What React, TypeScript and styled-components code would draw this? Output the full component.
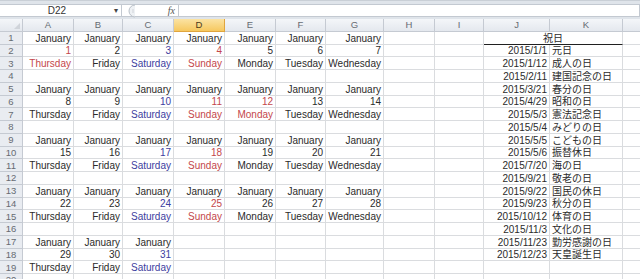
import { createGlobalStyle, styled } from 'styled-components';

const GlobalStyle = createGlobalStyle`
  html, body {
    margin: 0;
    padding: 0;
    background: #ffffff;
    overflow: hidden;
  }
`;

type Tone = 'plain' | 'red' | 'blue';
type Align = 'left' | 'right' | 'center';

interface CellData {
  text: string;
  tone?: Tone;
  align?: Align;
  underline?: boolean;
  span?: number;
}

const COLUMNS: [string, number][] = [
  ['A', 51],
  ['B', 49],
  ['C', 51],
  ['D', 51],
  ['E', 51],
  ['F', 50],
  ['G', 58],
  ['H', 51],
  ['I', 49],
  ['J', 66],
  ['K', 73],
  ['L', 80],
];

const DAY_NAMES = ['Thursday', 'Friday', 'Saturday', 'Sunday', 'Monday', 'Tuesday', 'Wednesday'];
const HOLIDAY_DATES = [1, 12];

const HOLIDAYS: [string, string][] = [
  ['2015/1/1', '元日'],
  ['2015/1/12', '成人の日'],
  ['2015/2/11', '建国記念の日'],
  ['2015/3/21', '春分の日'],
  ['2015/4/29', '昭和の日'],
  ['2015/5/3', '憲法記念日'],
  ['2015/5/4', 'みどりの日'],
  ['2015/5/5', 'こどもの日'],
  ['2015/5/6', '振替休日'],
  ['2015/7/20', '海の日'],
  ['2015/9/21', '敬老の日'],
  ['2015/9/22', '国民の休日'],
  ['2015/9/23', '秋分の日'],
  ['2015/10/12', '体育の日'],
  ['2015/11/3', '文化の日'],
  ['2015/11/23', '勤労感謝の日'],
  ['2015/12/23', '天皇誕生日'],
];

const ROW_COUNT = 20;

// build the sheet: rows[r][c] for columns A..L
function buildRows(): (CellData | null)[][] {
  const rows: (CellData | null)[][] = Array.from({ length: ROW_COUNT }, () =>
    Array.from({ length: COLUMNS.length }, () => null),
  );

  for (let week = 0; week < 5; week++) {
    const base = week * 4;
    for (let col = 0; col < 7; col++) {
      const date = week * 7 + col + 1;
      if (date > 31) continue;
      let tone: Tone = 'plain';
      if (col === 2) tone = 'blue';
      if (col === 3 || HOLIDAY_DATES.includes(date)) tone = 'red';
      rows[base][col] = { text: 'January', align: 'right' };
      rows[base + 1][col] = { text: String(date), tone, align: 'right' };
      rows[base + 2][col] = { text: DAY_NAMES[col], tone, align: 'right' };
    }
  }

  rows[0][9] = { text: '祝日', align: 'center', underline: true, span: 2 };
  HOLIDAYS.forEach(([date, name], i) => {
    rows[i + 1][9] = { text: date, align: 'right' };
    rows[i + 1][10] = { text: name, align: 'left' };
  });

  return rows;
}

const ROWS = buildRows();

function FormulaButton() {
  return (
    <svg width="12" height="14" viewBox="0 0 12 14">
      <path d="M9 1 A6 6 0 0 0 9 13" fill="#eef1f4" stroke="#b9c0c8" strokeWidth="1" />
      <path d="M6 6 h2 M6 8 h2" stroke="#c8cdd3" strokeWidth="0.8" />
    </svg>
  );
}

function App() {
  return (
    <StyledPage>
      <GlobalStyle />
      <StyledToolbar>
        <StyledNameBox>
          <StyledNameText>D22</StyledNameText>
          <StyledDropArrow>▾</StyledDropArrow>
        </StyledNameBox>
        <StyledFormulaTools>
          <FormulaButton />
          <StyledFx>fx</StyledFx>
        </StyledFormulaTools>
        <StyledFormulaInput />
      </StyledToolbar>

      <StyledSheet $columns={COLUMNS.map(([, w]) => `${w}px`).join(' ')}>
        <StyledCorner />
        {COLUMNS.map(([name]) => (
          <StyledColHeader key={name} $active={name === 'D'}>
            {name}
          </StyledColHeader>
        ))}

        {ROWS.map((row, r) => {
          const cells = [];
          for (let c = 0; c < row.length; c++) {
            const cell = row[c];
            cells.push(
              <StyledCell
                key={`${r}-${c}`}
                $tone={cell?.tone ?? 'plain'}
                $align={cell?.align ?? 'left'}
                $underline={cell?.underline ?? false}
                $span={cell?.span ?? 1}
              >
                {cell?.text}
              </StyledCell>,
            );
            if (cell?.span) c += cell.span - 1;
          }
          return [
            <StyledRowHeader key={`h${r}`}>{r + 1}</StyledRowHeader>,
            ...cells,
          ];
        })}
      </StyledSheet>
    </StyledPage>
  );
}

export default App;

const StyledPage = styled.div`
  width: 640px;
  height: 279px;
  overflow: hidden;

  font-family: 'Liberation Sans', 'Noto Sans CJK JP', sans-serif;
  font-size: 10px;
  color: #2b2b2b;
`;

const StyledToolbar = styled.div`
  display: flex;
  align-items: stretch;

  height: 19px;
  box-sizing: border-box;
  padding: 3px 0 2px;

  background: #dfe4ea;
  border-top: 1px solid #c9cfd6;
`;

const StyledNameBox = styled.div`
  display: flex;
  align-items: center;

  width: 122px;
  box-sizing: border-box;
  padding-right: 3px;

  background: #ffffff;
  border: 1px solid #c3c9d1;
  border-left: none;
`;

const StyledNameText = styled.span`
  flex: 1;
  text-align: center;
  color: #333;
`;

const StyledDropArrow = styled.span`
  font-size: 8px;
  color: #444;
`;

const StyledFormulaTools = styled.div`
  display: flex;
  align-items: center;
  justify-content: space-between;

  width: 56px;
  box-sizing: border-box;
  padding: 0 3px 0 4px;

  background: #ffffff;
  border-top: 1px solid #c3c9d1;
  border-bottom: 1px solid #c3c9d1;
`;

const StyledFx = styled.span`
  font-family: 'Liberation Serif', serif;
  font-style: italic;
  font-size: 10px;
  color: #555;
`;

const StyledFormulaInput = styled.div`
  flex: 1;

  background: #ffffff;
  border: 1px solid #c3c9d1;
`;

const StyledSheet = styled.div<{ $columns: string }>`
  display: grid;
  grid-template-columns: 23px ${({ $columns }) => $columns};
  grid-template-rows: 12.75px;
  grid-auto-rows: 12.75px;
`;

const StyledHeaderBase = styled.div`
  display: flex;
  align-items: center;
  justify-content: center;
  box-sizing: border-box;

  background: linear-gradient(#f4f6f9, #e4e8ee);
  border-right: 1px solid #c5cad2;
  border-bottom: 1px solid #c5cad2;

  font-size: 9.5px;
  color: #666b72;
`;

const StyledCorner = styled(StyledHeaderBase)`
  position: relative;

  &::after {
    content: '';
    position: absolute;
    right: 2px;
    bottom: 2px;
    border-left: 6px solid transparent;
    border-bottom: 6px solid #d0d4da;
  }
`;

const StyledColHeader = styled(StyledHeaderBase)<{ $active: boolean }>`
  ${({ $active }) =>
    $active &&
    `
    background: linear-gradient(#fbe3a3, #f6c85f);
    border-color: #e0a53e;
    color: #4a3a1a;
  `}
`;

const StyledRowHeader = styled(StyledHeaderBase)`
  background: #e9ecf1;
`;

const TONES: Record<Tone, string> = {
  plain: '#2b2b2b',
  red: '#c4474b',
  blue: '#3d40a0',
};

const StyledCell = styled.div<{ $tone: Tone; $align: Align; $underline: boolean; $span: number }>`
  display: flex;
  align-items: flex-end;
  justify-content: ${({ $align }) =>
    $align === 'right' ? 'flex-end' : $align === 'center' ? 'center' : 'flex-start'};
  grid-column: span ${({ $span }) => $span};

  box-sizing: border-box;
  padding: 0 2px 0 2px;
  line-height: 11px;
  white-space: nowrap;
  overflow: visible;

  border-right: 1px solid #dadcdf;
  border-bottom: ${({ $underline }) => ($underline ? '1px solid #202020' : '1px solid #dadcdf')};

  color: ${({ $tone }) => TONES[$tone]};
`;
